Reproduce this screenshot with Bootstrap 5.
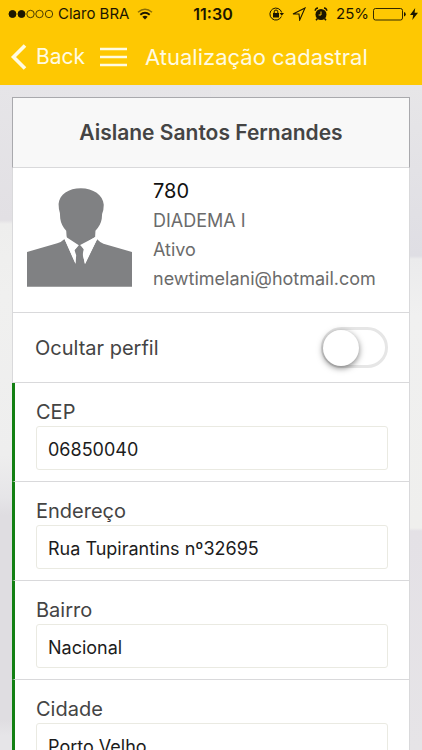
<!DOCTYPE html>
<html lang="pt-BR">
<head>
<meta charset="utf-8">
<meta name="viewport" content="width=device-width, initial-scale=1">
<title>Atualização cadastral</title>
<link href="https://cdn.jsdelivr.net/npm/bootstrap@5.3.0/dist/css/bootstrap.min.css" rel="stylesheet">
<style>
body { font-family: Inter, "Liberation Sans", sans-serif; color: #444; }
.app-top { background: #fec802; }
.status-line { height: 28px; padding: 0 4px 0 8px; font-size: 15px; line-height: 28px; color: #1c1600; display: grid; grid-template-columns: 1fr auto 1fr; }
.clock { font-size: 16px; font-weight: 600; }
.title-line { height: 57px; padding: 0 10px; font-size: 21px; line-height: 56px; }
.title-line, .title-line a, .title-line button { color: #fffbe2; }
.page-title { font-size: 22px; font-weight: 400; line-height: 56px; margin-left: 18px; }
.menu-btn { margin-left: 15px; }
.app-main { padding: 12px 12px 0; scrollbar-width: none;
  background:
    linear-gradient(#e6e5e8 0, #e2e0e4 135px, #eeeeed 139px, #f0f0ef 210px, #eeeeee 370px, #e6e5e8 412px, #dfdde1 430px, #dfdde1 635px, #e6e5e8 650px) left / 50% 100% no-repeat,
    linear-gradient(#e7e6e8 0, #dfdee4 171px, #ebebec 174px, #f0f0f0 230px, #efefed 443px, #e4e1e6 446px, #e6e4e7 100%) right / 50% 100% no-repeat; }
.form-list { --bs-list-group-border-radius: 0; --bs-list-group-color: #444; }
.form-list > .list-group-item { border: 1px solid #d9d9db; border-top: 0; }
.form-list > .name-item { border: 1px solid #a9a9ad; border-bottom-color: #d9d9db; background: #f8f8f8; padding: 23px 12px 22px; font-size: 21px; line-height: 24px; font-weight: 600; }
.profile-item { padding: 9px 14px; min-height: 145px; }
.avatar { margin-top: 11px; margin-right: 21px; }
.profile-data { line-height: 29px; font-size: 18px; color: #6b6b6b; }
.profile-data strong { font-size: 20px; font-weight: 400; color: #111; }
.toggle-item { padding: 0 21px 0 22px; min-height: 70px; font-size: 20px; }
.form-list .ios-switch { appearance: none; width: 67px; height: 41px; margin: 0; padding: 0; border: 3px solid #e6e6e6; border-radius: 21px; background: #fff; display: flex; align-items: center; }
.form-list .ios-switch::before { content: ""; width: 36px; height: 36px; margin-left: -1px; border-radius: 50%; background: #fff; box-shadow: 0 2px 6px rgba(0,0,0,.5); }
.form-list > .field-item { border-left: 3px solid #138013; padding: 15px 21px 11px; background: #fff; }
.field-item label { display: block; font-size: 20px; line-height: 28px; }
.field-item .form-control { height: 44px; font-size: 18px; color: #1c1c1c; border: 1px solid #eaeae2; border-radius: 3px; padding: 2px 11px 0; }
</style>
<script src="https://cdn.jsdelivr.net/npm/bootstrap@5.3.0/dist/js/bootstrap.bundle.min.js"></script>
</head>
<body class="vh-100 d-flex flex-column overflow-hidden">
<header class="app-top">
  <div class="status-line">
    <div class="d-flex align-items-center">
      <svg width="46" height="10" viewBox="0 0 46 10" fill="none" stroke="#1c1600"><g fill="#1c1600"><circle cx="4.500" cy="5" r="3.500"/><circle cx="13.500" cy="5" r="3.500"/></g><circle cx="22.500" cy="5" r="3.700" stroke-width=".8"/><circle cx="31.500" cy="5" r="3.700" stroke-width=".8"/><circle cx="41" cy="5" r="3.700" stroke-width=".8"/></svg>
      <span class="ms-1">Claro BRA</span>
      <svg class="ms-2" width="16" height="12" viewBox="0 0 16 12" fill="none" stroke="#1c1600"><path d="M1 4.200Q8-1.800 15 4.200" stroke="#8b6e05" stroke-width="1.500"/><path d="M3.300 6.700Q8 2.700 12.700 6.700" stroke-width="1.900"/><path d="M8 11.500L5.300 8.800Q8 6.800 10.700 8.800Z" fill="#1c1600" stroke="none"/></svg>
    </div>
    <span class="clock">11:30</span>
    <div class="d-flex align-items-center justify-content-end">
      <svg width="15" height="14" viewBox="0 0 15 14" fill="none" stroke="#1c1600"><path d="M12.400 9.500A6 6 0 1 1 12.700 5.500"/><path d="M10.600 6H15L12.800 8.800Z" fill="#1c1600" stroke="none"/><rect x="4" y="6" width="6" height="4.500" fill="#1c1600" stroke="none"/><path d="M5.200 6V4.800a1.800 1.800 0 0 1 3.600 0V6"/></svg>
      <svg class="ms-2" width="14" height="14" viewBox="0 0 14 14" fill="none" stroke="#1c1600" stroke-width="1.100"><path d="M1 7L13 1L7.700 13L7 7Z"/></svg>
      <svg class="ms-2" width="14" height="14" viewBox="0 0 14 14"><circle cx="7" cy="7.500" r="5.500" fill="#1c1600"/><path d="M1.200 3.700A3 3 0 0 1 4 1M10 1a3 3 0 0 1 2.800 2.700M3.500 11.500L2 13.300M10.500 11.500l1.500 1.800" stroke="#1c1600" stroke-width="1.500" fill="none"/><path d="M7 4.500V8H4.700" stroke="#fec802" fill="none"/></svg>
      <span class="ms-2">25%</span>
      <svg class="ms-1" width="33" height="14" viewBox="0 0 33 14" fill="none" stroke="#1c1600"><rect x=".5" y="1.500" width="29" height="11.500" rx="2" stroke-width=".9"/><path d="M31 5v4.500q1.700-.6 1.700-2.250T31 5" fill="#1c1600" stroke="none"/></svg>
      <svg class="ms-1" width="8" height="12" viewBox="0 0 8 12"><path d="M5.200 0L0 7h3.200L2.300 12L8 4.800H4.600Z" fill="#1c1600"/></svg>
    </div>
  </div>
  <nav class="title-line d-flex align-items-center">
    <a href="#" class="d-flex align-items-center text-decoration-none"><svg width="18" height="26" viewBox="0 0 18 26" fill="none" stroke="currentColor" stroke-width="3.600"><path d="M15 1.500L3.500 13L15 24.500"/></svg><span class="ms-2">Back</span></a>
    <button type="button" class="menu-btn btn p-0 border-0 d-flex" aria-label="Menu"><svg width="27" height="20" viewBox="0 0 27 20" stroke="currentColor" stroke-width="2.600"><path d="M0 2h27M0 10h27M0 18h27"/></svg></button>
    <h1 class="page-title mb-0 text-nowrap">Atualização cadastral</h1>
  </nav>
</header>
<main class="app-main flex-fill overflow-auto">
  <form class="form-list list-group">
    <h2 class="list-group-item name-item text-center mb-0">Aislane Santos Fernandes</h2>
    <div class="list-group-item profile-item d-flex align-items-start">
      <svg class="avatar flex-shrink-0" width="105" height="99" viewBox="0 0 316 297" role="img" aria-label="Foto"><path fill="#808183" d="M0 192L91 166Q104 162 113 153L146 226L144 198L142 187L149 178L122 160L119 143L118 128Q103 112 100 91L99 75Q95 62 95 48C97 18 126 0 162 0C199 0 229 20 231 50Q231 66 226 78L225 92Q222 111 206 128L205 147L169 170L158 172L148 177L160 168L171 182L168 198L174 228L211 154Q218 162 230 167L316 192V297H0Z"/><path fill="#fff" d="M119 148L156 172L143 187L148 202L146 228L113 154ZM206 147L160 171L172 185L168 201L175 228L211 154Z"/></svg>
      <div class="profile-data d-flex flex-column"><strong>780</strong><span>DIADEMA I</span><span>Ativo</span><span>newtimelani@hotmail.com</span></div>
    </div>
    <div class="list-group-item toggle-item d-flex align-items-center justify-content-between">
      <label for="hide">Ocultar perfil</label>
      <input class="ios-switch" type="checkbox" role="switch" id="hide">
    </div>
    <div class="list-group-item field-item"><label for="cep">CEP</label><input class="form-control" id="cep" value="06850040"></div>
    <div class="list-group-item field-item"><label for="street">Endereço</label><input class="form-control" id="street" value="Rua Tupirantins nº32695"></div>
    <div class="list-group-item field-item"><label for="area">Bairro</label><input class="form-control" id="area" value="Nacional"></div>
    <div class="list-group-item field-item"><label for="city">Cidade</label><input class="form-control" id="city" value="Porto Velho"></div>
  </form>
</main>
</body>
</html>
